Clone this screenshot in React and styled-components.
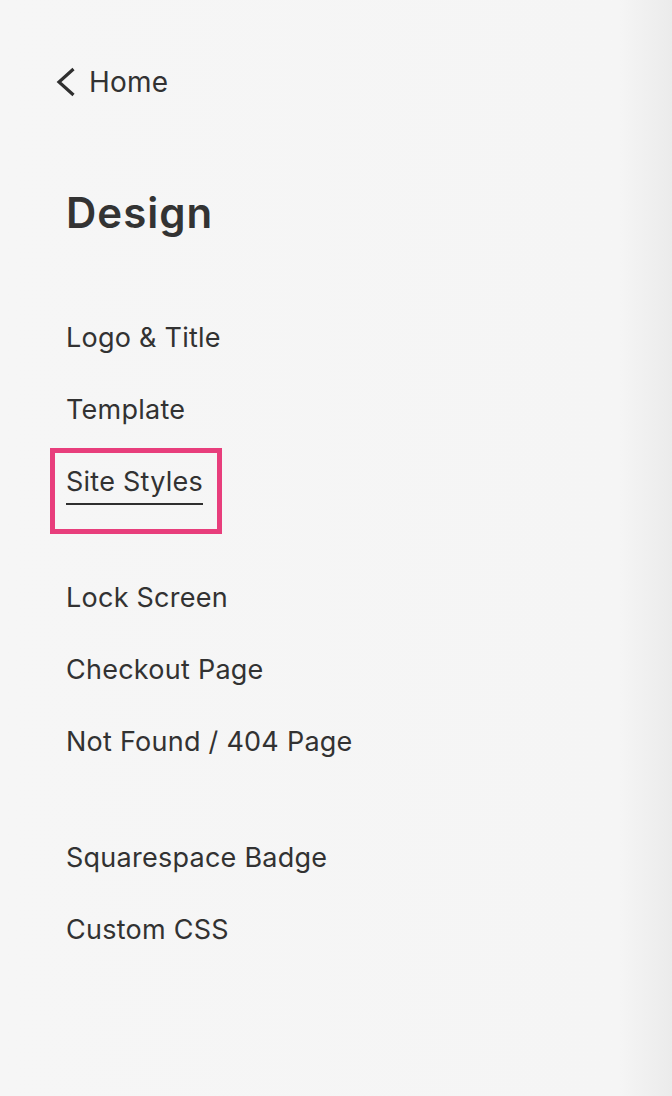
import React from "react";
import styled, { createGlobalStyle } from "styled-components";

const GlobalStyle = createGlobalStyle`
  html, body {
    margin: 0;
    padding: 0;
  }
  body {
    font-family: Inter, "Liberation Sans", Arial, sans-serif;
    color: #323232;
    -webkit-font-smoothing: antialiased;
  }
`;

const Panel = styled.aside`
  width: 672px;
  height: 1096px;
  box-sizing: border-box;
  padding: 62px 0 0 66px;
  display: flex;
  flex-direction: column;
  background: linear-gradient(to right, #f6f6f6 0, #f5f5f5 620px, #ebebeb 672px);
  overflow: hidden;
`;

const BackLink = styled.a`
  display: flex;
  align-items: center;
  gap: 13px;
  height: 40px;
  margin-left: -12px;
  font-size: 28px;
  letter-spacing: 0.2px;
  color: #323232;
  text-decoration: none;
  cursor: pointer;

  svg {
    display: block;
    flex-shrink: 0;
  }
`;

const Title = styled.h1`
  margin: 86px 0 0;
  height: 50px;
  line-height: 50px;
  font-size: 42px;
  font-weight: 600;
  letter-spacing: 1px;
  color: #333;
`;

const Nav = styled.nav`
  margin-top: 64px;
  display: flex;
  flex-direction: column;
  gap: 44px;
`;

const Group = styled.ul`
  list-style: none;
  margin: 0;
  padding: 0;
  display: flex;
  flex-direction: column;
`;

const Item = styled.li`
  height: 72px;
  display: flex;
  align-items: center;
`;

const ItemLabel = styled.span`
  position: relative;
  font-size: 27px;
  line-height: 32px;
  letter-spacing: 0.25px;
  color: #323232;
  cursor: pointer;
  border-bottom: 2px solid ${p => (p.$active ? "#2f2f2f" : "transparent")};
  padding-bottom: 5px;
  margin-bottom: -7px;
`;

const Highlight = styled.span`
  position: absolute;
  top: -18px;
  left: -16px;
  right: -19px;
  bottom: -31px;
  border: 5px solid #e83e7c;
  pointer-events: none;
`;

const groups = [
  ["Logo & Title", "Template", "Site Styles"],
  ["Lock Screen", "Checkout Page", "Not Found / 404 Page"],
  ["Squarespace Badge", "Custom CSS"],
];

const ChevronLeft = () => (
  <svg width="22" height="32" viewBox="0 0 22 32" fill="none">
    <path
      d="M19.5 3 L5 16 L19.5 29"
      stroke="#2f2f2f"
      strokeWidth="3.2"
      strokeLinecap="butt"
      strokeLinejoin="miter"
    />
  </svg>
);

export default function App() {
  return (
    <>
      <GlobalStyle />
      <Panel>
        <BackLink>
          <ChevronLeft />
          Home
        </BackLink>
        <Title>Design</Title>
        <Nav>
          {groups.map((items, gi) => (
            <Group key={gi}>
              {items.map(label => {
                const active = label === "Site Styles";
                return (
                  <Item key={label}>
                    <ItemLabel $active={active}>
                      {label}
                      {active && <Highlight />}
                    </ItemLabel>
                  </Item>
                );
              })}
            </Group>
          ))}
        </Nav>
      </Panel>
    </>
  );
}
